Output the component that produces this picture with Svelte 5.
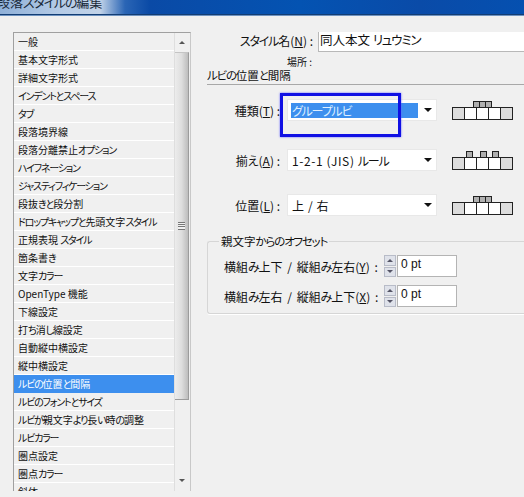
<script>
  const items = [
    '一般', '基本文字形式', '詳細文字形式', 'インデントとスペース', 'タブ', '段落境界線',
    '段落分離禁止オプション', 'ハイフネーション', 'ジャスティフィケーション', '段抜きと段分割',
    'ドロップキャップと先頭文字スタイル', '正規表現 スタイル', '箇条書き', '文字カラー',
    'OpenType 機能', '下線設定', '打ち消し線設定', '自動縦中横設定', '縦中横設定',
    'ルビの位置と間隔', 'ルビのフォントとサイズ', 'ルビが親文字より長い時の調整', 'ルビカラー',
    '圏点設定', '圏点カラー', '斜体'
  ];
  const selected = 'ルビの位置と間隔';

  const rubyRows = [
    { label: '種類', key: 'T', value: 'グループルビ', active: true, ruby: [21, 27, 33], gap: 28 },
    { label: '揃え', key: 'A', value: '1-2-1 (JIS) ルール', ruby: [14, 28, 40], gap: 23 },
    { label: '位置', key: 'L', value: '上 / 右', ruby: [21, 27, 33], gap: 0 }
  ];
  const cells = [0, 12, 24, 36, 48];

  const offsets = [
    { label: '横組み上下 / 縦組み左右', key: 'Y' },
    { label: '横組み左右 / 縦組み上下', key: 'X' }
  ];

  // the original UI font sets kana much narrower than kanji
  const runs = (text) => text.match(/[\u3041-\u3093\u30a1-\u30fc]+|[^\u3041-\u3093\u30a1-\u30fc]+/g);
  const isKana = (run) => /^[\u3041-\u3093\u30a1-\u30fc]/.test(run);
</script>

{#snippet jp(text)}
  {#each runs(text) as run}<span class:kana={isKana(run)}>{run}</span>{/each}
{/snippet}

<div class="page">
  <div class="titlebar"><span>{@render jp('段落スタイルの編集')}</span></div>

  <div class="main">
    <div class="list">
      <ul>
        {#each items as item}
          <li class:sel={item === selected}>{@render jp(item)}</li>
        {/each}
      </ul>
      <div class="scrollbar">
        <span class="arrow up"></span>
        <div class="thumb">
          <span class="grip"></span>
        </div>
        <span class="arrow down"></span>
      </div>
    </div>

    <div class="panel">
      <div class="name-row">
        <span class="name-label">{@render jp('スタイル名')}(<u>N</u>) :</span>
        <div class="name-input">{@render jp('同人本文 リュウミン')}</div>
      </div>
      <div class="place">場所 :</div>
      <h2>{@render jp('ルビの位置と間隔')}</h2>

      <div class="ruby-rows">
        {#each rubyRows as row}
          <div class="ruby-row" style="margin-bottom: {row.gap}px">
            <span class="ruby-label">{row.label}(<u>{row.key}</u>) :</span>
            <div class="select">
              <span class="value" class:active={row.active}>{@render jp(row.value)}</span>
              <span class="caret"></span>
            </div>
            <svg width="62" height="19" viewBox="0 0 62 19">
              {#each row.ruby as x}
                <rect x={x + 0.5} y="0.5" width="6" height="6" fill="#b0b0b0" stroke="#222" />
              {/each}
              {#each cells as x, i}
                <rect x={x + 0.5} y="6.5" width="12" height="12" fill={i === 0 || i === 4 ? '#dcdcdc' : '#fff'} stroke="#222" />
              {/each}
            </svg>
          </div>
        {/each}
      </div>

      <fieldset>
        <legend>{@render jp('親文字からのオフセット')}</legend>
        {#each offsets as row}
          <div class="offset-row">
            <span class="offset-label">{@render jp(row.label)}(<u>{row.key}</u>) :</span>
            <div class="spin">
              <span class="spin-up"></span>
              <span class="spin-down"></span>
            </div>
            <div class="num">0 pt</div>
          </div>
        {/each}
      </fieldset>
    </div>
  </div>

  <div class="callout"></div>
</div>

<style>
  :global(body) {
    margin: 0;
    background: #f0f0f0;
  }

  .page {
    position: relative;
    width: 524px;
    height: 497px;
    overflow: hidden;
    background: #f0f0f0;
    color: #111;
    font-family: "Noto Sans CJK JP", "Liberation Sans", sans-serif;
    font-feature-settings: "palt";
  }

  .kana {
    letter-spacing: -1.2px;
  }

  .titlebar {
    height: 14px;
    display: flex;
    align-items: flex-end;
    overflow: hidden;
    background: linear-gradient(90deg, #8fb0d8 0, #b5cbe6 60px, #c2d3e8 100px, #2a65b5 125px, #0a4aa6 150px, #0453b2 300px, #0a4ba8 420px, #0550b0 524px);
    border-bottom: 1px solid #123d74;
    box-shadow: 0 1px 0 #6f93c0;
    font-size: 13px;
  }

  .titlebar > span {
    margin-left: -3px;
    margin-bottom: 5px;
    line-height: 14px;
    color: #1a2a3a;
    white-space: nowrap;
  }

  .main {
    display: flex;
    padding: 17px 0 0 13px;
  }

  .list {
    display: flex;
    flex: none;
    box-sizing: border-box;
    width: 178px;
    height: 459px;
    overflow: hidden;
    border-top: 1px solid #a0a0a0;
    border-left: 1px solid #a0a0a0;
    border-right: 1px solid #c8c8c8;
  }

  ul {
    flex: 1;
    min-width: 0;
    margin: 0;
    padding: 0;
    list-style: none;
  }

  li {
    box-sizing: border-box;
    height: 18px;
    padding: 0 0 1px 4px;
    border-bottom: 1px solid #fff;
    font-size: 10px;
    line-height: 17px;
    white-space: nowrap;
    overflow: hidden;
  }

  li.sel {
    background: #3d8fee;
    border-bottom-color: #3d8fee;
    color: #fff;
  }

  .scrollbar {
    flex: none;
    width: 16px;
    background: #f0f0f0;
    border-left: 1px solid #dedede;
    box-sizing: border-box;
    display: flex;
    flex-direction: column;
    align-items: flex-start;
  }

  .arrow {
    flex: none;
    width: 0;
    height: 0;
    margin-left: 4px;
    border-left: 3px solid transparent;
    border-right: 3px solid transparent;
  }

  .arrow.up {
    margin-top: 8px;
    border-bottom: 3px solid #555;
  }

  .arrow.down {
    margin-top: 79px;
    border-top: 3px solid #555;
  }

  .thumb {
    box-sizing: border-box;
    width: 14px;
    height: 348px;
    margin-top: 8px;
    flex: none;
    display: flex;
    align-items: center;
    justify-content: center;
    background: linear-gradient(90deg, #ececec, #dedede 50%, #bdbdbd);
    border-right: 1px solid #9c9c9c;
    border-top: 1px solid #c4c4c4;
    border-bottom: 1px solid #9c9c9c;
  }

  .grip {
    width: 7px;
    height: 6px;
    border-top: 1px solid #777;
    border-bottom: 1px solid #777;
    background: linear-gradient(#f0f0f0 0 1px, #777 1px 2px, #f0f0f0 2px 3px, #777 3px 4px, #f0f0f0 4px);
  }

  .panel {
    flex: 1;
    min-width: 0;
    margin-left: 16px;
    overflow: hidden;
  }

  .name-row {
    display: flex;
    align-items: center;
    margin-top: -3px;
  }

  .name-label {
    flex: none;
    width: 106px;
    padding-right: 5px;
    text-align: right;
    font-size: 12px;
    white-space: nowrap;
  }

  .name-input {
    flex: 1;
    height: 21px;
    padding-left: 1px;
    background: #fff;
    border: 1px solid #b8b8b8;
    border-right: none;
    font-size: 12.5px;
    line-height: 19px;
    white-space: nowrap;
  }

  .place {
    width: 105px;
    margin-top: 3px;
    text-align: right;
    font-size: 10px;
    line-height: 13px;
  }

  h2 {
    margin: 0;
    padding-bottom: 2px;
    border-bottom: 1px solid #a8a8a8;
    font-size: 11.5px;
    font-weight: 400;
    line-height: 14px;
  }

  .ruby-rows {
    margin-top: 14px;
  }

  .ruby-row {
    display: flex;
    align-items: center;
  }

  .ruby-row svg {
    flex: none;
    margin-left: 15px;
  }

  .ruby-label {
    flex: none;
    width: 73px;
    padding-right: 7px;
    text-align: right;
    font-size: 12px;
    white-space: nowrap;
  }

  .select {
    flex: none;
    box-sizing: border-box;
    width: 150px;
    height: 22px;
    padding: 3px 0 3px 3px;
    display: flex;
    align-items: center;
    background: #fff;
    border: 1px solid #e8e8e8;
  }

  .value {
    width: 127px;
    height: 15px;
    flex: none;
    padding-left: 1px;
    box-sizing: border-box;
    font-size: 12px;
    letter-spacing: 0.6px;
    line-height: 15px;
    white-space: nowrap;
  }

  .value.active {
    background: #3d8fee;
    color: #dfefff;
  }

  .caret {
    margin-left: 6px;
    width: 0;
    height: 0;
    border-left: 4px solid transparent;
    border-right: 4px solid transparent;
    border-top: 4px solid #111;
  }

  fieldset {
    box-sizing: border-box;
    min-width: 0;
    height: 80px;
    margin: 18px 0 0;
    padding: 7px 0 0 16px;
    border: 1px solid #d6d6d6;
    border-right: none;
    border-radius: 3px 0 0 3px;
    box-shadow: 0 1px 0 #fff;
  }

  legend {
    margin-left: -5px;
    padding: 0 2px;
    font-size: 11.5px;
    line-height: 14px;
  }

  .offset-row {
    display: flex;
    align-items: center;
    margin-bottom: 8px;
  }

  .offset-label {
    flex: none;
    width: 160px;
    font-size: 12px;
    word-spacing: 2px;
    white-space: nowrap;
  }

  .spin {
    flex: none;
    width: 12px;
    height: 22px;
    display: flex;
    flex-direction: column;
    gap: 1px;
  }

  .spin span {
    flex: 1;
    display: flex;
    align-items: center;
    justify-content: center;
    background: #dfe2ea;
    border: 1px solid #b8bcc8;
  }

  .spin span::after {
    content: '';
    width: 0;
    height: 0;
    border-left: 3px solid transparent;
    border-right: 3px solid transparent;
  }

  .spin-up::after {
    border-bottom: 3px solid #556;
  }

  .spin-down::after {
    border-top: 3px solid #556;
  }

  .num {
    flex: none;
    box-sizing: border-box;
    width: 60px;
    height: 22px;
    margin-left: 1px;
    padding-left: 3px;
    background: #fff;
    border: 1px solid #b4b4b4;
    font-family: "Liberation Sans", sans-serif;
    font-size: 12px;
    line-height: 17px;
  }

  .callout {
    position: absolute;
    left: 280px;
    top: 93px;
    box-sizing: border-box;
    width: 121px;
    height: 44px;
    border: 3px solid #1010e4;
    box-shadow: 0 0 2px #6060ff;
  }
</style>
